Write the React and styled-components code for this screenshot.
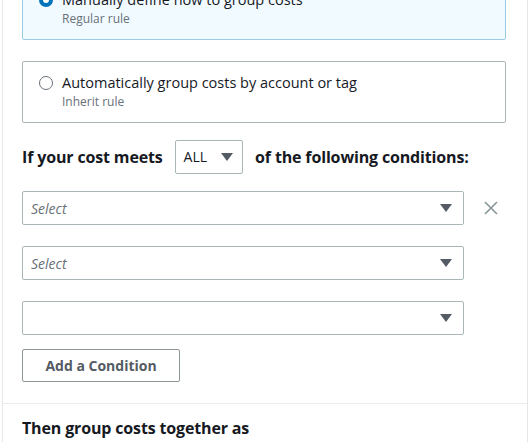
import styled, { createGlobalStyle } from 'styled-components';

const Global = createGlobalStyle`
  html, body { margin: 0; padding: 0; background: #fff; }
  body { font-family: "Open Sans", "Noto Sans", Arial, sans-serif; color: #16191f; }
`;

const Panel = styled.div`
  margin: 0 2px;
  width: 524px;
  height: 442px;
  border-left: 1px solid #e4e7e9;
  border-right: 1px solid #e4e7e9;
  overflow: hidden;
`;

const Body = styled.div`
  padding: 0 21px 0 19px;
  display: flex;
  flex-direction: column;
`;

const Tile = styled.label`
  display: flex;
  gap: 9px;
  align-items: flex-start;
  height: 62px;
  box-sizing: border-box;
  padding: 11px 16px;
  margin-top: ${p => p.$first ? '-22px' : '21px'};
  border: 1px solid ${p => p.$selected ? '#9ccbea' : '#aab7b8'};
  background: ${p => p.$selected ? '#f1faff' : '#fff'};
  border-radius: 2px;
`;

const Radio = styled.span`
  flex: none;
  width: 14px;
  height: 14px;
  margin-top: 3px;
  border-radius: 50%;
  box-sizing: border-box;
  border: ${p => p.$on ? '4px solid #0073bb' : '1px solid #687078'};
  background: #fff;
`;

const TileText = styled.div`
  display: flex;
  flex-direction: column;
  gap: 1px;
`;

const TileTitle = styled.span`
  font-size: 14.5px;
  line-height: 20px;
  color: #16191f;
`;

const TileSub = styled.span`
  font-size: 12px;
  line-height: 16px;
  color: #687078;
`;

const Heading = styled.div`
  display: flex;
  align-items: center;
  gap: 12px;
  margin-top: 17px;
  font-size: 16px;
  font-weight: 700;
  line-height: 22px;
  letter-spacing: -0.15px;
`;

const Mini = styled.div`
  display: flex;
  align-items: center;
  gap: 14px;
  height: 34px;
  box-sizing: border-box;
  padding: 0 9px 0 8px;
  border: 1px solid #aab7b8;
  border-radius: 2px;
  font-size: 14px;
  font-weight: 400;
  letter-spacing: 0;
  color: #16191f;
`;

const Caret = styled.span`
  width: 0;
  height: 0;
  border-left: 6px solid transparent;
  border-right: 6px solid transparent;
  border-top: 8px solid #545b64;
`;

const Row = styled.div`
  display: flex;
  align-items: center;
  margin-top: ${p => p.$top || 21}px;
`;

const Select = styled.div`
  width: 442px;
  height: 34px;
  box-sizing: border-box;
  display: flex;
  align-items: center;
  justify-content: space-between;
  padding: 0 11px 0 8px;
  border: 1px solid #aab7b8;
  border-radius: 2px;
  font-size: 14px;
  font-style: italic;
  color: #687078;
`;

const Remove = styled.button`
  margin-left: 19px;
  padding: 0;
  border: none;
  background: none;
  display: flex;
`;

const Button = styled.button`
  align-self: flex-start;
  margin-top: 14px;
  width: 158px;
  height: 33px;
  border: 1px solid #8d9699;
  border-radius: 2px;
  background: #fff;
  font-family: inherit;
  font-size: 14px;
  font-weight: 700;
  color: #545b64;
`;

const Divider = styled.div`
  margin-top: 21px;
  border-top: 1px solid #eaeded;
`;

const Footer = styled.div`
  padding: 13px 19px;
  font-size: 16px;
  font-weight: 700;
  line-height: 22px;
  letter-spacing: -0.15px;
`;

const XIcon = () => (
  <svg width="16" height="16" viewBox="0 0 16 16">
    <path d="M2 2 L14 14 M14 2 L2 14" stroke="#879596" strokeWidth="1.6" fill="none" />
  </svg>
);

export default function App() {
  return (
    <>
      <Global />
      <Panel>
        <Body>
          <Tile $first $selected>
            <Radio $on />
            <TileText>
              <TileTitle>Manually define how to group costs</TileTitle>
              <TileSub>Regular rule</TileSub>
            </TileText>
          </Tile>
          <Tile>
            <Radio />
            <TileText>
              <TileTitle>Automatically group costs by account or tag</TileTitle>
              <TileSub>Inherit rule</TileSub>
            </TileText>
          </Tile>
          <Heading>
            If your cost meets
            <Mini>ALL <Caret /></Mini>
            of the following conditions:
          </Heading>
          <Row $top={17}>
            <Select>Select<Caret /></Select>
            <Remove><XIcon /></Remove>
          </Row>
          <Row>
            <Select>Select<Caret /></Select>
          </Row>
          <Row>
            <Select><span /><Caret /></Select>
          </Row>
          <Button>Add a Condition</Button>
        </Body>
        <Divider />
        <Footer>Then group costs together as</Footer>
      </Panel>
    </>
  );
}
